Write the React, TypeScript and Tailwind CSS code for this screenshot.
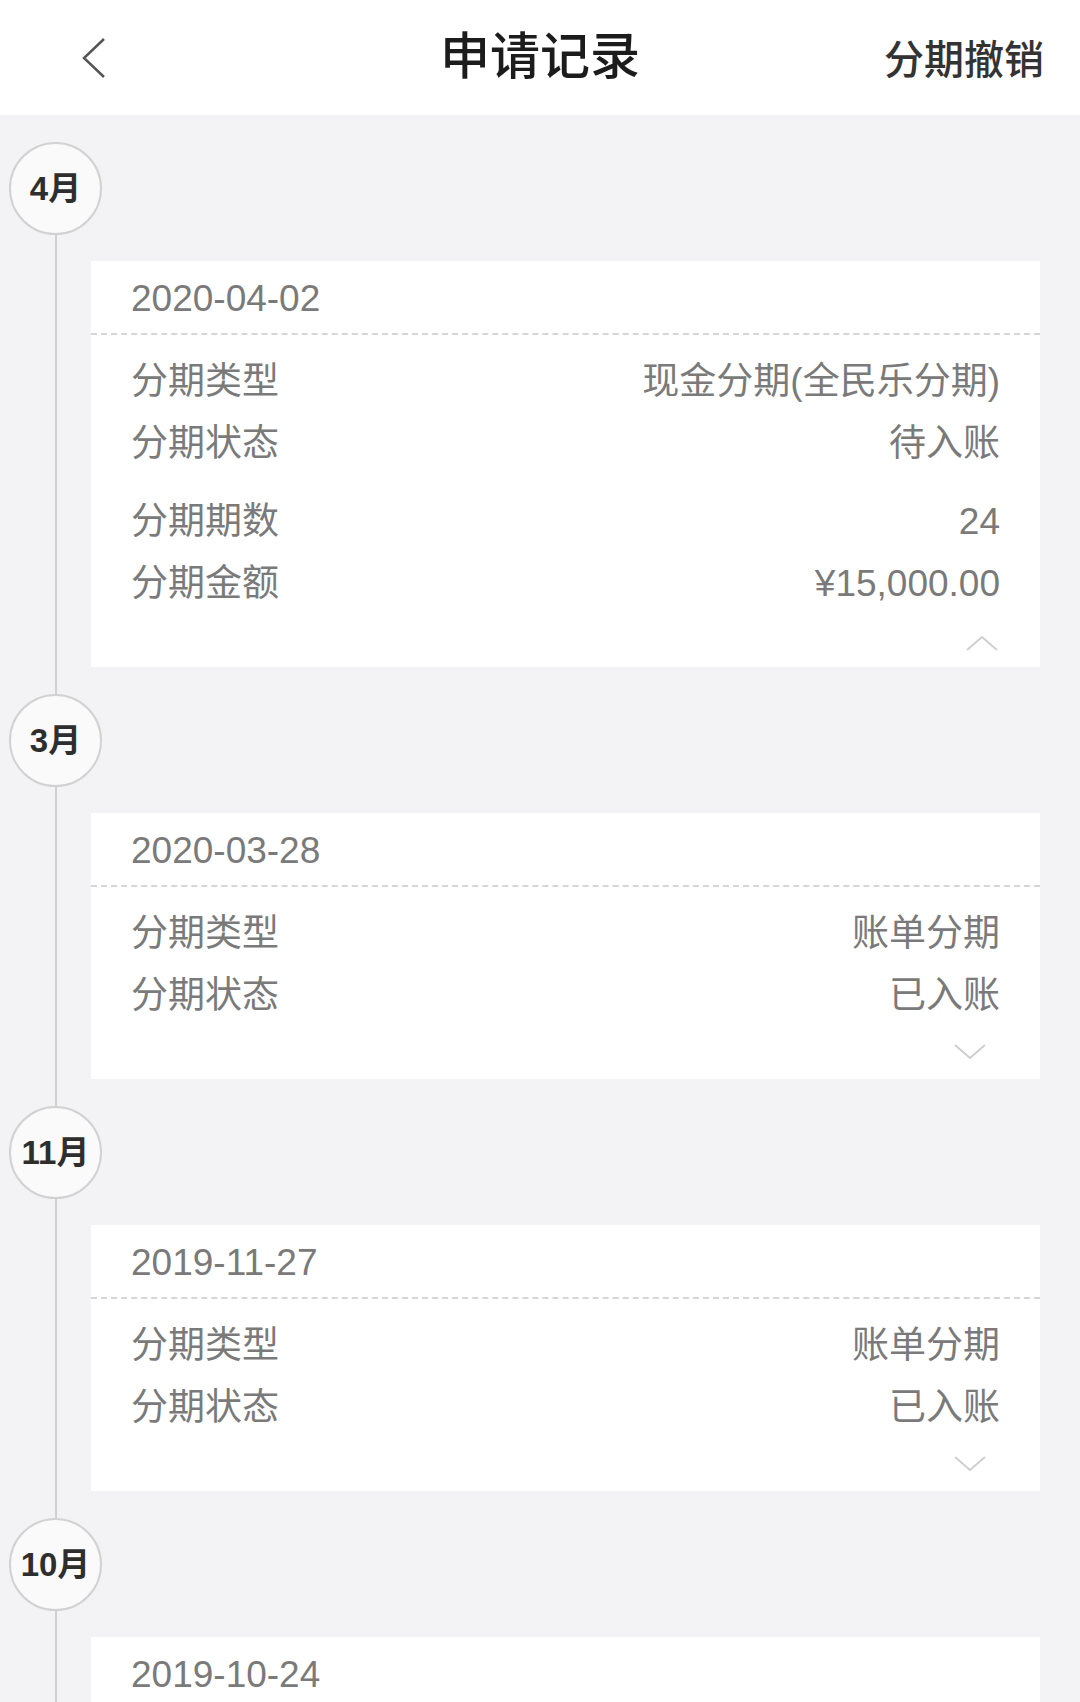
import React from "react"

type Row = { label: string; value: string; gap?: boolean }

type Record = {
    month: string
    date: string
    rows: Row[]
    open?: boolean
}

const records: Record[] = [
    {
        month: "4月",
        date: "2020-04-02",
        open: true,
        rows: [
            { label: "分期类型", value: "现金分期(全民乐分期)" },
            { label: "分期状态", value: "待入账" },
            { label: "分期期数", value: "24", gap: true },
            { label: "分期金额", value: "¥15,000.00" },
        ],
    },
    {
        month: "3月",
        date: "2020-03-28",
        rows: [
            { label: "分期类型", value: "账单分期" },
            { label: "分期状态", value: "已入账" },
        ],
    },
    {
        month: "11月",
        date: "2019-11-27",
        rows: [
            { label: "分期类型", value: "账单分期" },
            { label: "分期状态", value: "已入账" },
        ],
    },
    {
        // only the date of this one fits on screen
        month: "10月",
        date: "2019-10-24",
        rows: [],
    },
]

const font = { fontFamily: '"Liberation Sans", "Noto Sans CJK SC", sans-serif' }

const Chevron = ({ up }: { up?: boolean }) => (
    <svg width="32" height="16" viewBox="0 0 32 16" fill="none">
        <polyline
            points={up ? "1,15 16,2 31,15" : "1,1 16,14 31,1"}
            stroke="#cfcfcf"
            strokeWidth="2"
            strokeLinejoin="round"
        />
    </svg>
)

const RecordCard = ({ record }: { record: Record }) => {
    return (
        <div>
            {/* month bubble */}
            <div className="mt-[27px] ml-[9px] relative z-10 flex h-[93px] w-[93px] items-center justify-center rounded-full border-2 border-[#d2d2d2] bg-[#fafafa]">
                <span className="text-[33px] font-semibold text-[#2e2e2e]">{record.month}</span>
            </div>

            <div className="mt-[26px] ml-[91px] mr-[40px] bg-white">
                <div className="flex h-[74px] items-center border-b-2 border-dashed border-[#d6d6d6] pl-[40px] pt-[4px] text-[37px] text-[#7a7a7a]">
                    {record.date}
                </div>
                {record.rows.length > 0 && (
                    <>
                        <div className="pt-[16px] pl-[40px] pr-[40px]">
                            {record.rows.map((row) => (
                                <div
                                    key={row.label}
                                    className={`flex h-[62px] items-center justify-between text-[37px] text-[#7a7a7a] ${row.gap ? "mt-[16px]" : ""}`}
                                >
                                    <span>{row.label}</span>
                                    <span>{row.value}</span>
                                </div>
                            ))}
                        </div>
                        <div className={`flex h-[52px] items-start justify-end ${record.open ? "pt-[20px] pr-[42px]" : "pt-[17px] pr-[54px]"}`}>
                            <Chevron up={record.open} />
                        </div>
                    </>
                )}
            </div>
        </div>
    )
}

export default function App() {
    return (
        <div className="h-[1702px] w-[1080px] overflow-hidden bg-[#f3f2f5]" style={font}>
            {/* header */}
            <div className="relative flex h-[115px] items-center justify-center bg-white">
                <div className="absolute left-[80px] top-[37px]">
                    <svg width="28" height="42" viewBox="0 0 28 42" fill="none">
                        <polyline points="24,2 4,21 24,40" stroke="#555555" strokeWidth="2.5" />
                    </svg>
                </div>
                <h1 className="text-[50px] font-medium text-[#1c1c1c]">申请记录</h1>
                <span className="absolute right-[36px] top-[30px] text-[40px] font-medium text-[#333333]">分期撤销</span>
            </div>

            {/* timeline */}
            <div className="relative">
                <div className="absolute left-[55px] top-0 h-[1700px] w-[2px] bg-[#d0d0d0]" />
                {records.map((r) => (
                    <RecordCard key={r.date} record={r} />
                ))}
            </div>
        </div>
    )
}
